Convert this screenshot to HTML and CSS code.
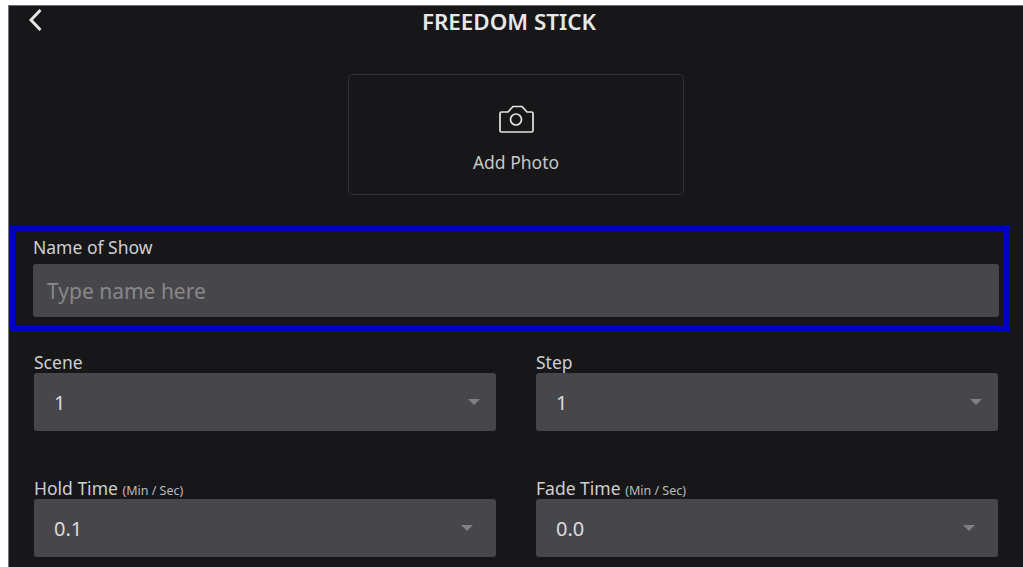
FILE: index.html
```html
<!DOCTYPE html>
<html lang="en">
<head>
    <meta charset="UTF-8">
    <meta name="viewport" content="width=device-width, initial-scale=1.0">
    <title>Freedom Stick</title>
    <link rel="stylesheet" href="styles.css">
</head>
<body>
    <div class="screen">
        <header class="topbar">
            <svg class="back" width="16" height="24" viewBox="0 0 16 24" fill="none" stroke="#e6e6e6" stroke-width="3">
                <path d="M13.5 2 4 12 13.500 22"/>
            </svg>
            <h1>FREEDOM STICK</h1>
        </header>
        <div class="photo">
            <svg width="38" height="28" viewBox="0 0 38 28" fill="none" stroke="#e4e4e4" stroke-width="1.7" stroke-linejoin="round">
                <path d="M3 8.500a1.500 1.500 0 0 1 1.500-1.500H11l5-5.500h9l5 5.500h4.500a1.500 1.500 0 0 1 1.500 1.500v17a1.500 1.500 0 0 1-1.500 1.500h-30a1.500 1.500 0 0 1-1.500-1.500z"/>
                <circle cx="19" cy="14.500" r="5.500"/>
            </svg>
            <span>Add Photo</span>
        </div>
        <div class="highlight">
            <label class="label">Name of Show</label>
            <div class="input">Type name here</div>
        </div>
        <div class="fields">
            <div class="field">
                <label class="label">Scene</label>
                <div class="select"><span>1</span><i class="arrow"></i></div>
            </div>
            <div class="field">
                <label class="label">Step</label>
                <div class="select"><span>1</span><i class="arrow"></i></div>
            </div>
            <div class="field">
                <label class="label">Hold Time <small>(Min / Sec)</small></label>
                <div class="select time"><span>0.1</span><i class="arrow"></i></div>
            </div>
            <div class="field">
                <label class="label">Fade Time <small>(Min / Sec)</small></label>
                <div class="select time"><span>0.0</span><i class="arrow"></i></div>
            </div>
        </div>
    </div>
</body>
</html>
```

FILE: styles.css
```css
html, body {
    margin: 0;
    height: 100%;
    overflow: hidden;
    background-color: #ffffff;
}
body {
    padding: 5px 0 0 8px;
    box-sizing: border-box;
    font-family: "Noto Sans", "Open Sans", sans-serif;
    color: #d8d8d8;
}
.screen {
    height: 562px;
    background-color: #17171a;
    border-top: 1px solid #6a6a6a;
    border-left: 1px solid #77777a;
    box-sizing: border-box;
    overflow: hidden;
}
.topbar {
    position: relative;
    height: 68px;
}
.back {
    position: absolute;
    left: 18px;
    top: 2px;
}
h1 {
    margin: 0;
    padding: 4px 14px 0 0;
    font-size: 22.400px;
    line-height: 24px;
    font-weight: 600;
    text-align: center;
    color: #e8e8e8;
}
.photo {
    width: 336px;
    height: 121px;
    margin-left: 339px;
    border: 1px solid #303033;
    border-radius: 4px;
    box-sizing: border-box;
    display: flex;
    flex-direction: column;
    align-items: center;
    padding-top: 30px;
    gap: 19px;
    font-size: 17.500px;
    line-height: 20px;
    color: #c8c8c8;
}
.highlight {
    width: 1000px;
    height: 107px;
    margin: 30px 0 0 1px;
    padding: 6px 5px 9px 17px;
    border: 6px solid #0000c4;
    box-sizing: border-box;
}
.label {
    display: block;
    font-size: 17.500px;
    line-height: 20px;
    color: #cfcfcf;
}
.label small {
    font-size: 12.500px;
    line-height: 0;
    color: #bcbcbc;
}
.input {
    width: 966px;
    height: 53px;
    margin-top: 7px;
    padding-left: 14px;
    box-sizing: border-box;
    background-color: #47474b;
    border-radius: 3px;
    font-size: 21px;
    line-height: 55px;
    color: #87878a;
}
.fields {
    display: grid;
    grid-template-columns: 462px 462px;
    column-gap: 40px;
    row-gap: 47px;
    margin: 20px 0 0 25px;
}
.select {
    height: 58px;
    margin-top: 1px;
    padding: 0 16px 0 20px;
    box-sizing: border-box;
    background-color: #47474b;
    border-radius: 3px;
    display: flex;
    align-items: center;
    justify-content: space-between;
    font-size: 20px;
    color: #dcdcdc;
}
.select.time {
    padding-right: 23px;
}
.arrow {
    width: 0;
    height: 0;
    border-left: 6px solid transparent;
    border-right: 6px solid transparent;
    border-top: 6px solid #808084;
}
```
